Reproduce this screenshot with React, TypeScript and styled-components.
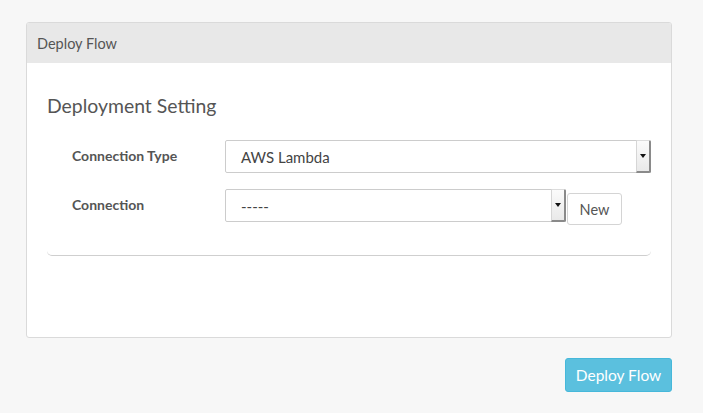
import React from "react";
import styled, { createGlobalStyle } from "styled-components";

const Global = createGlobalStyle`
  html, body { margin: 0; padding: 0; background: #f7f7f7; }
  body { font-family: "Lato", "Noto Sans", sans-serif; color: #555; }
  * { box-sizing: border-box; }
`;

const Page = styled.div`
  width: 703px;
  height: 413px;
  padding: 22px 31px 0 26px;
  display: flex;
  flex-direction: column;
  align-items: stretch;
`;

const Panel = styled.div`
  height: 316px;
  background: #fff;
  border: 1px solid #dadada;
  border-radius: 3px;
  display: flex;
  flex-direction: column;
  overflow: hidden;
`;

const PanelHeading = styled.div`
  height: 40px;
  background: #e8e8e8;
  padding: 0 0 0 10px;
  display: flex;
  align-items: center;
  font-size: 14.5px;
  color: #555;
`;

const PanelBody = styled.div`
  padding: 30px 20px 0 20px;
`;

const Title = styled.h3`
  margin: 0;
  font-size: 19.4px;
  font-weight: 400;
  color: #555;
  line-height: 25px;
`;

const Fieldset = styled.div`
  margin-top: 18px;
  padding: 4px 0 30px 25px;
  border-bottom: 1px solid #cfcfcf;
  border-radius: 0 0 5px 5px;
  display: flex;
  flex-direction: column;
  gap: 16px;
`;

const Row = styled.div`
  display: grid;
  grid-template-columns: 153px 1fr;
  align-items: start;
`;

const Label = styled.label`
  font-weight: 700;
  font-size: 14px;
  color: #555;
  line-height: 32px;
`;

const Controls = styled.div`
  display: flex;
  align-items: flex-start;
  gap: 1px;
`;

const SelectBox = styled.div<{ $w: number }>`
  width: ${(p) => p.$w}px;
  height: 33px;
  border: 1px solid #ccc;
  border-radius: 2px;
  background: #fff;
  display: flex;
  align-items: stretch;
`;

const SelectText = styled.div`
  flex: 1;
  padding-left: 15px;
  display: flex;
  align-items: center;
  font-size: 15px;
  color: #444;
`;

const Arrow = styled.div`
  width: 15px;
  margin: -1px -1px -1px 0;
  background: linear-gradient(#fbfbfb, #e9e9e9);
  border-right: 2px solid #8a8a8a;
  border-bottom: 2px solid #8a8a8a;
  border-left: 1px solid #d6d6d6;
  border-top: 1px solid #dcdcdc;
  border-radius: 0 2px 2px 0;
  display: flex;
  align-items: center;
  justify-content: center;
  &::after {
    content: "";
    border-left: 3px solid transparent;
    border-right: 3px solid transparent;
    border-top: 4px solid #111;
  }
`;

const NewButton = styled.button`
  margin-top: 4px;
  width: 55px;
  height: 32px;
  border: 1px solid #d4d4d4;
  border-radius: 3px;
  background: #fff;
  color: #555;
  font-family: inherit;
  font-size: 14.5px;
  padding: 0;
`;

const Footer = styled.div`
  display: flex;
  justify-content: flex-end;
  margin-top: 20px;
`;

const PrimaryButton = styled.button`
  width: 107px;
  height: 34px;
  background: #5bc0de;
  border: 1px solid #46b8da;
  border-radius: 3px;
  color: #fff;
  font-family: inherit;
  font-size: 15.5px;
  padding: 0;
`;

function Select({ value, width }: { value: string; width: number }) {
  return (
    <SelectBox $w={width}>
      <SelectText>{value}</SelectText>
      <Arrow />
    </SelectBox>
  );
}

export default function App() {
  return (
    <>
      <Global />
      <Page>
        <Panel>
          <PanelHeading>Deploy Flow</PanelHeading>
          <PanelBody>
            <Title>Deployment Setting</Title>
            <Fieldset>
              <Row>
                <Label>Connection Type</Label>
                <Controls>
                  <Select value="AWS Lambda" width={426} />
                </Controls>
              </Row>
              <Row>
                <Label>Connection</Label>
                <Controls>
                  <Select value="-----" width={341} />
                  <NewButton>New</NewButton>
                </Controls>
              </Row>
            </Fieldset>
          </PanelBody>
        </Panel>
        <Footer>
          <PrimaryButton>Deploy Flow</PrimaryButton>
        </Footer>
      </Page>
    </>
  );
}
